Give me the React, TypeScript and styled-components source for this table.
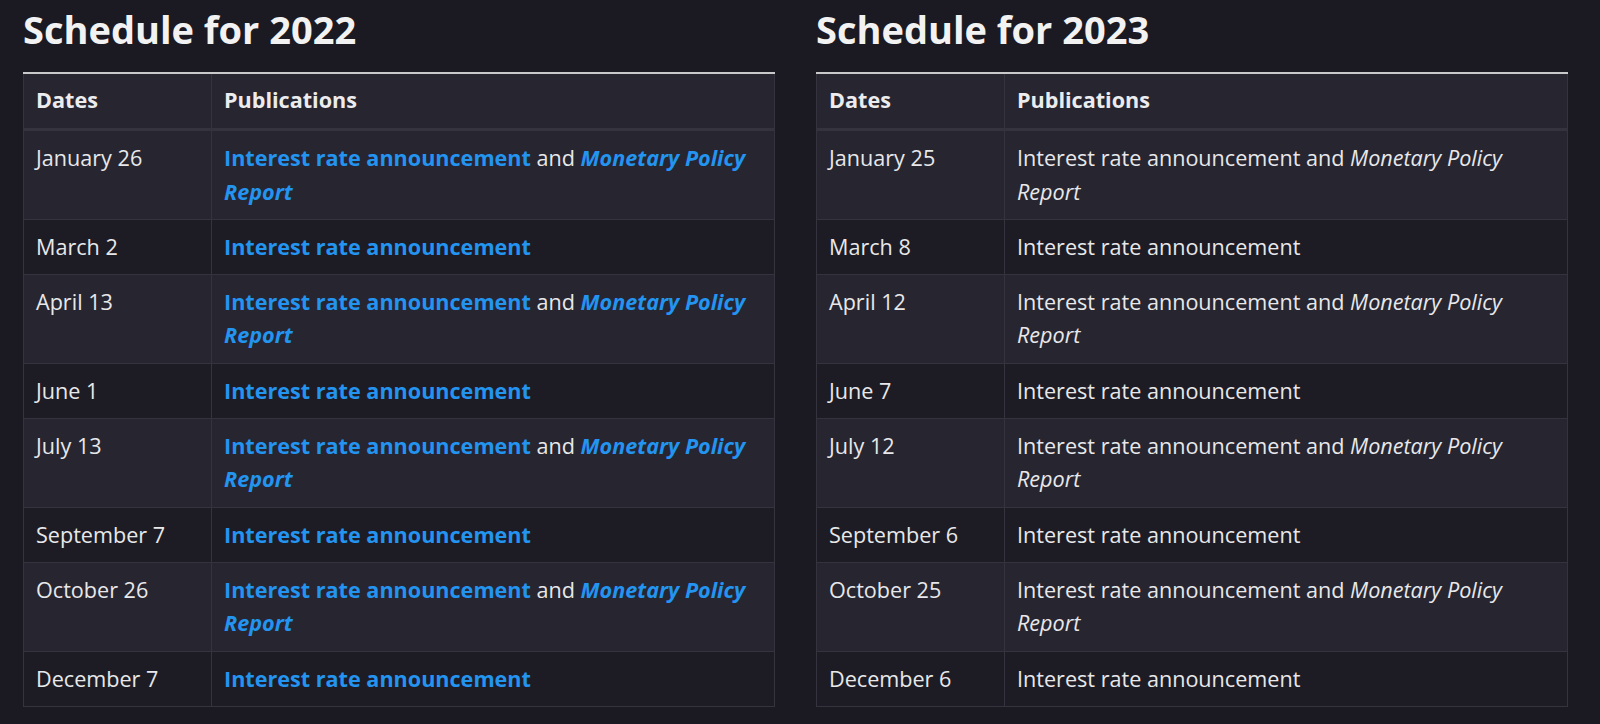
import React from "react";
import styled, { createGlobalStyle } from "styled-components";

const GlobalStyle = createGlobalStyle`
  html, body {
    margin: 0;
    padding: 0;
    background: #1b1a22;
  }
  body {
    font-family: "Open Sans", "Noto Sans", "Liberation Sans", sans-serif;
    color: #e8e8ea;
  }
`;

const Page = styled.div`
  display: grid;
  grid-template-columns: 752px 752px;
  column-gap: 41px;
  padding: 0 32px 0 23px;
  min-height: 724px;
  box-sizing: border-box;
  background: #1b1a22;
`;

const Section = styled.section`
  display: flex;
  flex-direction: column;
`;

const Heading = styled.h2`
  margin: 5px 0 19px;
  font-size: 38px;
  line-height: 48px;
  font-weight: 700;
  color: #f2f2f2;
`;

const Table = styled.table`
  width: 100%;
  border-collapse: collapse;
  border-top: 2px solid #c9c9cc;
  font-size: 21.6px;
  line-height: 33.3px;
`;

const HeadCell = styled.th<{ $first?: boolean }>`
  text-align: left;
  font-weight: 700;
  padding: 9px 12px 12px;
  background: #262530;
  border-left: 1px solid #34333e;
  border-right: 1px solid #34333e;
  border-bottom: 3px solid #34333e;
  width: ${(p) => (p.$first ? "163px" : "auto")};
  color: #ececee;
`;

const Row = styled.tr<{ $odd: boolean }>`
  background: ${(p) => (p.$odd ? "#262530" : "#1d1c24")};
`;

const Cell = styled.td`
  padding: 10px 12px 11px;
  vertical-align: top;
  border: 1px solid #34333e;
  color: #e8e8ea;
`;

const Link = styled.a`
  color: #2394f0;
  font-weight: 700;
  text-decoration: none;
`;

const LinkItalic = styled(Link)`
  font-style: italic;
`;

const Em = styled.em`
  font-style: italic;
`;

type Entry = { date: string; mpr: boolean };

const data2022: Entry[] = [
  { date: "January 26", mpr: true },
  { date: "March 2", mpr: false },
  { date: "April 13", mpr: true },
  { date: "June 1", mpr: false },
  { date: "July 13", mpr: true },
  { date: "September 7", mpr: false },
  { date: "October 26", mpr: true },
  { date: "December 7", mpr: false },
];

const data2023: Entry[] = [
  { date: "January 25", mpr: true },
  { date: "March 8", mpr: false },
  { date: "April 12", mpr: true },
  { date: "June 7", mpr: false },
  { date: "July 12", mpr: true },
  { date: "September 6", mpr: false },
  { date: "October 25", mpr: true },
  { date: "December 6", mpr: false },
];

function Schedule({ year, rows, linked }: { year: string; rows: Entry[]; linked: boolean }) {
  return (
    <Section>
      <Heading>Schedule for {year}</Heading>
      <Table>
        <thead>
          <tr>
            <HeadCell $first>Dates</HeadCell>
            <HeadCell>Publications</HeadCell>
          </tr>
        </thead>
        <tbody>
          {rows.map((r, i) => (
            <Row key={r.date} $odd={i % 2 === 0}>
              <Cell>{r.date}</Cell>
              <Cell>
                {linked ? (
                  <>
                    <Link href="#">Interest rate announcement</Link>
                    {r.mpr && (
                      <>
                        {" "}and <LinkItalic href="#">Monetary Policy Report</LinkItalic>
                      </>
                    )}
                  </>
                ) : (
                  <>
                    Interest rate announcement
                    {r.mpr && (
                      <>
                        {" "}and <Em>Monetary Policy Report</Em>
                      </>
                    )}
                  </>
                )}
              </Cell>
            </Row>
          ))}
        </tbody>
      </Table>
    </Section>
  );
}

export default function App() {
  return (
    <>
      <GlobalStyle />
      <Page>
        <Schedule year="2022" rows={data2022} linked />
        <Schedule year="2023" rows={data2023} linked={false} />
      </Page>
    </>
  );
}
